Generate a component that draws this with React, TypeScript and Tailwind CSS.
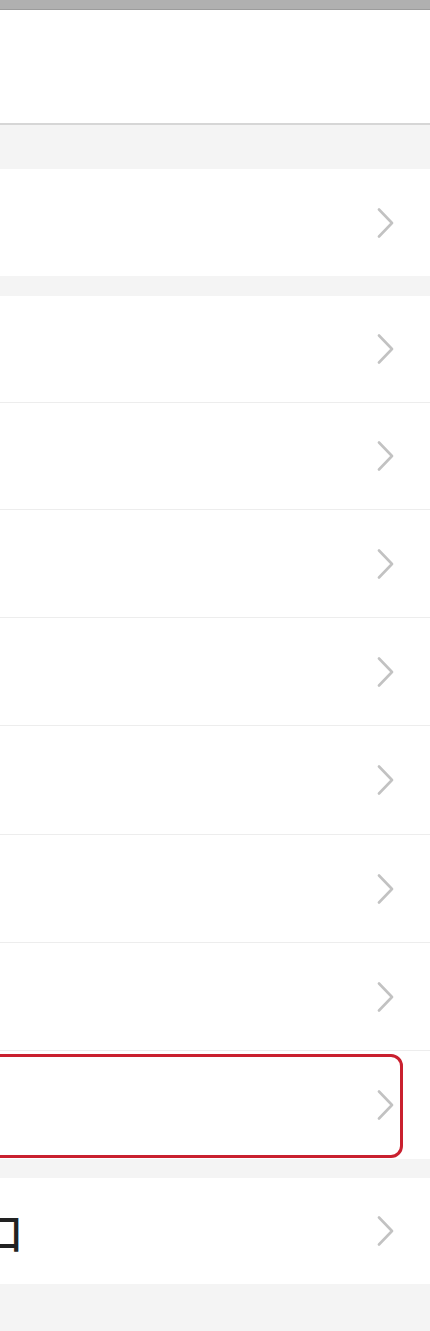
import React from "react";

function Chevron() {
  return (
    <svg width="20" height="30" viewBox="0 0 20 30" className="mr-[34px]">
      <polyline
        points="3,1.5 16,15 3,28.5"
        fill="none"
        stroke="#c2c2c2"
        strokeWidth="2.6"
        strokeLinecap="round"
        strokeLinejoin="round"
      />
    </svg>
  );
}

function Row({
  height,
  border = true,
  children,
  highlight = false,
}: {
  height: string;
  border?: boolean;
  children?: React.ReactNode;
  highlight?: boolean;
}) {
  return (
    <div
      className={`relative flex items-center justify-between bg-white ${height} ${
        border ? "border-b border-[#ededed]" : ""
      }`}
    >
      <div className="flex items-center">{children}</div>
      <Chevron />
      {highlight && (
        <div className="absolute left-[-20px] right-[27px] top-[3px] bottom-[1px] rounded-[12px] border-[3px] border-[#c9202f]" />
      )}
    </div>
  );
}

export default function App() {
  return (
    <div
      className="min-h-[1331px] w-[430px] bg-[#f4f4f4] overflow-hidden"
      style={{ fontFamily: '"Noto Sans CJK SC", "Noto Sans", sans-serif' }}
    >
      <div className="h-[10px] bg-[#b0b0b0] border-b border-[#9c9c9c]" />
      <div className="h-[115px] bg-white border-b-2 border-[#d6d6d6]" />
      <div className="h-[44px] bg-[#f4f4f4]" />
      <Row height="h-[107px]" border={false} />
      <div className="h-[20px] bg-[#f4f4f4]" />
      <div className="flex flex-col">
        <Row height="h-[107px]" />
        <Row height="h-[107px]" />
        <Row height="h-[108px]" />
        <Row height="h-[108px]" />
        <Row height="h-[109px]" />
        <Row height="h-[108px]" />
        <Row height="h-[108px]" />
        <Row height="h-[108px]" border={false} highlight />
      </div>
      <div className="h-[19px] bg-[#f4f4f4]" />
      <Row height="h-[106px]" border={false}>
        <span className="ml-[-18px] text-[41px] leading-none font-medium text-[#222222]">口</span>
      </Row>
    </div>
  );
}
